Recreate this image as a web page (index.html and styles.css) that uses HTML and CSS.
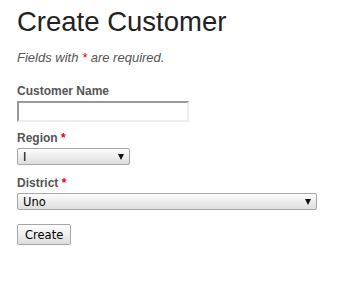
FILE: index.html
```html
<!DOCTYPE html>
<html lang="en">
<head>
  <meta charset="UTF-8" />
  <title>Create Customer</title>
  <link rel="stylesheet" href="styles.css">
</head>
<body>
<h1>Create Customer</h1>

<div class="form">
<form id="customer-form">
  <p class="note">Fields with <span class="required">*</span> are required.</p>

  <div class="row">
    <label for="Customer_name">Customer Name</label>
    <input type="text" id="Customer_name" class="text-field" />
  </div>

  <div class="row">
    <label for="Customer_region" class="required">Region <span class="required">*</span></label>
    <span class="select-wrap region">
      <select id="Customer_region"><option>I</option></select>
    </span>
  </div>

  <div class="row">
    <label for="Customer_district" class="required">District <span class="required">*</span></label>
    <span class="select-wrap district">
      <select id="Customer_district"><option>Uno</option></select>
    </span>
  </div>

  <div class="row buttons">
    <button type="submit">Create</button>
  </div>
</form>
</div>
</body>
</html>
```

FILE: styles.css
```css
body {
      margin: 0;
      padding: 0 17px;
      font-family: "Liberation Sans", Arial, sans-serif;
      font-size: 13px;
      color: #222;
    }
h1 {
      margin: 6px 0 0;
      font-size: 27.5px;
      font-weight: normal;
      line-height: 31px;
    }
p.note {
      margin: 13px 0 19px;
      font-style: italic;
      color: #555;
      line-height: 15px;
    }
span.required {
      color: #e00;
    }
.row {
      margin-bottom: 11px;
    }
.row label {
      display: block;
      font-weight: bold;
      font-size: 12px;
      line-height: 14px;
      color: #555;
      margin-bottom: 3px;
    }
.text-field {
      box-sizing: border-box;
      display: block;
      width: 172px;
      height: 21px;
      margin: 0 0 -2px;
      padding: 1px 3px;
      border: 2px solid #eee;
      border-top-color: #999;
      border-left-color: #999;
      background: #fff;
      font: inherit;
    }
.select-wrap {
      position: relative;
      display: block;
      height: 17px;
    }
.select-wrap.region {
      width: 113px;
    }
.select-wrap.district {
      width: 300px;
    }
.select-wrap select {
      appearance: none;
      -webkit-appearance: none;
      box-sizing: border-box;
      display: block;
      width: 100%;
      height: 17px;
      margin: 0;
      padding: 0 20px 0 5px;
      border: 1px solid #a6a6a6;
      border-radius: 2px;
      background: linear-gradient(#fdfdfd, #dedede);
      font-family: "DejaVu Sans", sans-serif;
      font-size: 11.5px;
      color: #000;
    }
.select-wrap::after {
      content: "";
      position: absolute;
      right: 6px;
      top: 6px;
      border-left: 3.5px solid transparent;
      border-right: 3.5px solid transparent;
      border-top: 6px solid #111;
      pointer-events: none;
    }
.buttons {
      margin-top: 14px;
    }
button {
      box-sizing: border-box;
      height: 21px;
      padding: 0 7px;
      border: 1px solid #a6a6a6;
      border-radius: 2px;
      background: linear-gradient(#fdfdfd, #dedede);
      font-family: "DejaVu Sans", sans-serif;
      font-size: 11.5px;
      color: #000;
    }
```
